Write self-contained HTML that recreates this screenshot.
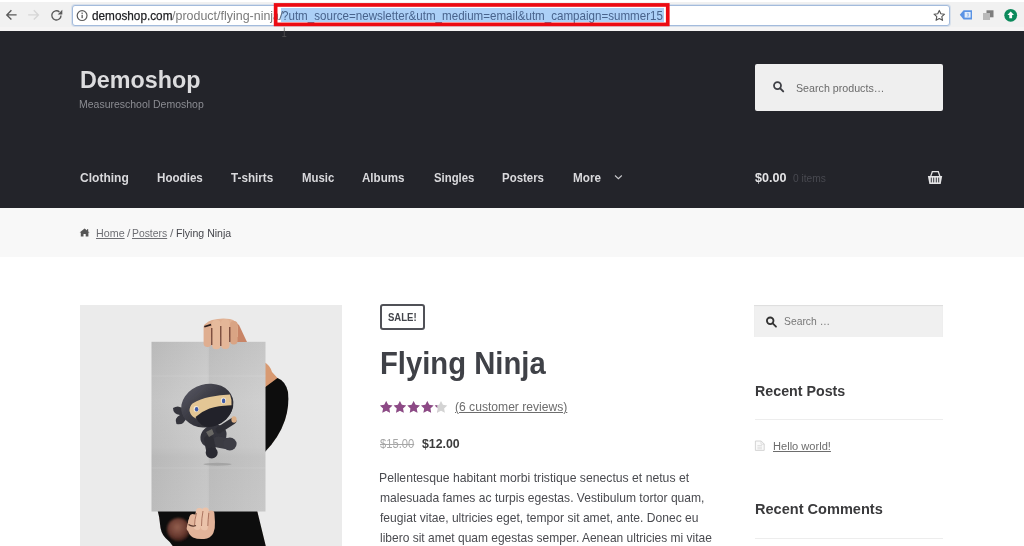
<!DOCTYPE html>
<html lang="en">
<head>
<meta charset="utf-8">
<title>Flying Ninja – Demoshop</title>
<style>
html,body,p,h1,h2,nav,main,aside{margin:0;padding:0;}
body{width:1024px;height:546px;overflow:hidden;position:relative;background:#fff;font-family:"Liberation Sans",sans-serif;}
.t{position:absolute;white-space:nowrap;line-height:1;transform-origin:0 50%;margin:0;padding:0;text-decoration:none;display:block;}
.abs{position:absolute;}
#chrome{left:0;top:0;width:1024px;height:31px;background:#f1f1f1;}
#chrome:before{content:"";position:absolute;left:0;top:0;width:100%;height:2px;background:#fff;}
#chrome:after{content:"";position:absolute;left:0;top:27px;width:100%;height:4px;background:#f5f4f4;}
#omni{left:71.5px;top:5px;width:876px;height:19px;background:#fff;border:1px solid #a3bbdc;border-radius:3px;box-shadow:0 0 0 1px rgba(150,180,220,.28);}
#sel{left:281px;top:7.5px;width:382.5px;height:14.5px;background:#acd0f7;}
#hdr{left:0;top:30.5px;width:1024px;height:177.5px;background:#23242a;}
#hsearch{left:755px;top:64px;width:187.6px;height:46.8px;background:#efefef;border-radius:2px;}
#crumb{left:0;top:208px;width:1024px;height:49px;background:#f8f8f8;}
#pimg{left:80px;top:305px;width:262px;height:241px;background:#ebebeb;overflow:hidden;}
#salebox{left:380.1px;top:304.4px;width:41.1px;height:21.8px;border:2px solid #505157;border-radius:3px;}
#ssearch{left:754.4px;top:304.7px;width:188.4px;height:32px;background:#f0f0f0;box-shadow:inset 0 1px 1px rgba(0,0,0,.08);}
.hr{left:755px;width:188px;height:1px;background:#ededed;}
</style>
</head>
<body>
<div id="chrome" class="abs"></div>
<div id="omni" class="abs"></div>
<div id="sel" class="abs"></div>
<span class="t" id="u1" style="left:92.13px;top:8.74px;font-size:13.3px;color:#202124;transform:scaleX(0.8850);-webkit-text-stroke:.25px #202124;">demoshop.com</span><span class="t" id="u2" style="left:172.20px;top:8.74px;font-size:13.3px;color:#7a7a7a;transform:scaleX(0.9369);">/product/flying-ninj</span><span class="t" id="u2b" style="left:272.87px;top:8.74px;font-size:13.3px;color:#7a7a7a;transform:scaleX(0.7926);">a</span><span class="t" id="u3" style="left:278.80px;top:8.74px;font-size:13.3px;color:#5f6f86;transform:scaleX(1.1228);">/</span><span class="t" id="u4" style="left:282.44px;top:8.74px;font-size:13.3px;color:#48638c;transform:scaleX(0.8714);">?utm_source=newsletter&amp;utm_medium=email&amp;utm_campaign=summer15</span>
<header id="hdr" class="abs"></header>
<a class="t" id="title" style="left:79.84px;top:68.76px;font-size:23.2px;font-weight:700;color:#dcdcde;transform:scaleX(1.0062);">Demoshop</a><span class="t" id="tag" style="left:78.78px;top:98.97px;font-size:10.9px;color:#8b8c92;transform:scaleX(0.9627);">Measureschool Demoshop</span>
<div id="hsearch" class="abs"></div>
<span class="t" id="sp" style="left:796.44px;top:82.18px;font-size:11.6px;color:#6b6b6b;transform:scaleX(0.9211);">Search products…</span>
<nav><a class="t" id="n1" style="left:79.75px;top:172.06px;font-size:12.1px;font-weight:700;color:#d9d9dc;transform:scaleX(0.9955);">Clothing</a><a class="t" id="n2" style="left:156.53px;top:172.06px;font-size:12.1px;font-weight:700;color:#d9d9dc;transform:scaleX(0.9601);">Hoodies</a><a class="t" id="n3" style="left:231.30px;top:172.06px;font-size:12.1px;font-weight:700;color:#d9d9dc;transform:scaleX(0.9670);">T-shirts</a><a class="t" id="n4" style="left:301.85px;top:172.06px;font-size:12.1px;font-weight:700;color:#d9d9dc;transform:scaleX(0.9408);">Music</a><a class="t" id="n5" style="left:362.31px;top:172.06px;font-size:12.1px;font-weight:700;color:#d9d9dc;transform:scaleX(0.9566);">Albums</a><a class="t" id="n6" style="left:433.52px;top:172.06px;font-size:12.1px;font-weight:700;color:#d9d9dc;transform:scaleX(0.9371);">Singles</a><a class="t" id="n7" style="left:502.44px;top:172.06px;font-size:12.1px;font-weight:700;color:#d9d9dc;transform:scaleX(0.9464);">Posters</a><a class="t" id="n8" style="left:573.03px;top:172.06px;font-size:12.1px;font-weight:700;color:#d9d9dc;transform:scaleX(0.9665);">More</a></nav>
<span class="t" id="cart1" style="left:754.84px;top:171.96px;font-size:12.1px;font-weight:700;color:#e4e4e6;transform:scaleX(1.0388);">$0.00</span><span class="t" id="cart2" style="left:792.73px;top:172.97px;font-size:10.9px;color:#484950;transform:scaleX(0.9365);">0 items</span>
<div id="crumb" class="abs"></div>
<a class="t" id="b1" style="left:95.64px;top:227.53px;font-size:10.6px;color:#6d6e73;transform:scaleX(1.0119);text-decoration:underline;text-decoration-thickness:.9px;text-underline-offset:.5px;">Home</a><span class="t" id="b2" style="left:126.60px;top:227.53px;font-size:10.6px;color:#6d6e73;transform:scaleX(1.1525);">/</span><a class="t" id="b3" style="left:132.17px;top:227.53px;font-size:10.6px;color:#6d6e73;transform:scaleX(0.9788);text-decoration:underline;text-decoration-thickness:.9px;text-underline-offset:.5px;">Posters</a><span class="t" id="b4" style="left:169.80px;top:227.53px;font-size:10.6px;color:#6d6e73;transform:scaleX(1.1525);">/</span><span class="t" id="b5" style="left:175.55px;top:227.53px;font-size:10.6px;color:#45464c;transform:scaleX(0.9976);">Flying Ninja</span>
<main>
<svg id="pimg" class="abs" width="262" height="241" viewBox="80 305 262 241" role="img" aria-label="Flying Ninja poster">
<defs>
<linearGradient id="pg" x1="0" y1="0" x2="0" y2="1"><stop offset="0" stop-color="#c3c3c3"/><stop offset=".35" stop-color="#cecece"/><stop offset=".62" stop-color="#c9c9c9"/><stop offset=".68" stop-color="#c2c2c2"/><stop offset="1" stop-color="#c6c6c6"/></linearGradient>
<linearGradient id="pg2" x1="0" y1="0" x2="1" y2="0"><stop offset="0" stop-color="#000" stop-opacity=".05"/><stop offset=".49" stop-color="#fff" stop-opacity=".05"/><stop offset=".5" stop-color="#000" stop-opacity=".04"/><stop offset="1" stop-color="#fff" stop-opacity=".04"/></linearGradient>
<radialGradient id="arm" cx=".45" cy=".4" r=".6"><stop offset="0" stop-color="#93604f"/><stop offset=".65" stop-color="#6a3a30"/><stop offset="1" stop-color="#3a1d18"/></radialGradient>
<linearGradient id="hd" x1="0" y1="0" x2=".6" y2="1"><stop offset="0" stop-color="#5b5b66"/><stop offset=".5" stop-color="#3b3b44"/><stop offset="1" stop-color="#2a2a31"/></linearGradient>
<filter id="bl" x="-10%" y="-10%" width="120%" height="120%"><feGaussianBlur stdDeviation=".6"/></filter>
<filter id="bl2" x="-20%" y="-20%" width="140%" height="140%"><feGaussianBlur stdDeviation="1.2"/></filter>
</defs>
<rect x="80" y="305" width="262" height="241" fill="#ebebeb"/>
<g filter="url(#bl)">
<!-- right arm skin + black sleeve -->
<path d="M264 362q6 3 8 10l6 6.5-13 12z" fill="#d89a72"/>
<path d="M264 388l13.5-10q8 3 10.5 14 1.500 14-3 28-6 18-21 33z" fill="#0b0908"/>
<!-- torso below poster -->
<path d="M157.500 510h99.500l9 37h-92.500q-3-5-8-9-5-5-5.500-14-.5-7-2.500-14z" fill="#0d0a09"/>
<!-- forearm -->
</g>
<ellipse cx="178.500" cy="529.500" rx="11.500" ry="11.500" fill="url(#arm)" filter="url(#bl2)"/>
<!-- poster -->
<rect x="151.500" y="341.800" width="114" height="169.700" fill="url(#pg)"/>
<rect x="151.500" y="341.800" width="114" height="169.700" fill="url(#pg2)"/>
<path d="M208.500 342v170" stroke="#fff" stroke-opacity=".12" stroke-width="1"/>
<path d="M151.500 376h114M151.500 468h114" stroke="#fff" stroke-opacity=".08" stroke-width="1.500"/>
<!-- ninja -->
<g filter="url(#bl)">
<ellipse cx="217.500" cy="464.300" rx="14" ry="1.500" fill="#8f8f8f" opacity=".55"/>
<!-- knot -->
<path d="M185 410q-6-6-12-2 0 6 7 7-6 3-3.500 9 7 2 10.500-7z" fill="#34343c"/>
<!-- body -->
<ellipse cx="213.500" cy="436" rx="13.500" ry="11" transform="rotate(-25 213.500 436)" fill="#34343c"/>
<path d="M219 430l14-9" stroke="#2f2f36" stroke-width="6.500" stroke-linecap="round"/>
<path d="M218 442l11 2" stroke="#3a3a43" stroke-width="11" stroke-linecap="round"/>
<ellipse cx="229.800" cy="444" rx="6.800" ry="6.400" fill="#3c3c45"/>
<path d="M209 440l2.500 12" stroke="#2f2f36" stroke-width="10" stroke-linecap="round"/>
<ellipse cx="211.700" cy="452.800" rx="6" ry="5.600" fill="#2c2c33"/>
<path d="M206 432l6-3 2 5-5 3z" fill="#8d8a80" opacity=".6"/>
<!-- hand -->
<ellipse cx="234" cy="419.500" rx="2.600" ry="3.200" fill="#ddb088"/>
<!-- head -->
<ellipse cx="207.300" cy="405.600" rx="26.500" ry="21.500" transform="rotate(-16 207.300 405.600)" fill="url(#hd)"/>
<!-- face -->
<path d="M189.500 411q0-5 3-7.500 8-5 17-6.500 11-2.500 20.500-2.500 2 5 1.500 11-12 .5-22 4.500-8 3.500-13.500 8.500-5-2-6.500-7.500z" fill="#e3c695"/>
<!-- mask lower -->
<path d="M195.500 417q6-5.500 14-8.500 10-3.500 23.500-3-1 8-7 14-8 7-17 7.500-9 0-13.500-10z" fill="#24242a"/>
<!-- eyes -->
<ellipse cx="196.200" cy="409" rx="2.600" ry="3" fill="#f3ead8"/><ellipse cx="223.400" cy="400.600" rx="2.600" ry="3.100" fill="#f3ead8"/>
<ellipse cx="196.600" cy="409.200" rx="1.700" ry="2.200" fill="#3f5aa8"/><ellipse cx="223.600" cy="400.900" rx="1.700" ry="2.300" fill="#3f5aa8"/>
</g>
<!-- hands -->
<g filter="url(#bl)">
<path d="M235 322l4 3 8 17h-12z" fill="#c88466"/>
<path d="M204 330q0-8 8-10 9-2.500 18-1 7 1.500 8 8v10h-34z" fill="#e0b092"/>
<rect x="203.600" y="323.500" width="8" height="23.500" rx="3.800" fill="#dfae90"/>
<rect x="212" y="320" width="8.600" height="29.300" rx="4" fill="#e6ba9c"/>
<rect x="221" y="319.300" width="8.600" height="29.700" rx="4" fill="#e4b698"/>
<rect x="230" y="321" width="7.600" height="23.500" rx="3.700" fill="#d9a484"/>
<path d="M211.800 328v17M220.800 326v20M229.800 327v15" stroke="#5e3024" stroke-width="1.100" fill="none"/>
<path d="M204.300 326.800l6.800-2.200" stroke="#2a1f1f" stroke-width="1.700"/>
</g>
<g filter="url(#bl)">
<path d="M188 530q-1-9 2-13 3-3 6-2l18-2q1.500 9 .5 16-1.500 8-7.500 9.500-8 1.500-14-1-4.500-2.500-5-7.500z" fill="#e2b49a"/>
<rect x="188" y="514" width="7.400" height="18" rx="3.600" fill="#e3b69c" transform="rotate(14 191.700 523)"/>
<rect x="194.800" y="508" width="7" height="22" rx="3.400" fill="#ebc3aa" transform="rotate(8 198.300 519)"/>
<rect x="201.400" y="507.400" width="7" height="23" rx="3.400" fill="#ebc3aa" transform="rotate(4 205 519)"/>
<rect x="208" y="510.500" width="6.400" height="20" rx="3.200" fill="#e2b298"/>
<path d="M196.500 513q-2 7-2 13M203 511q-1.500 8-1.500 15M208.800 513q-.8 7-1 13" stroke="#a46c58" stroke-width=".9" fill="none"/>
<path d="M188.500 524.500q3.500 2.500 7.500 1" stroke="#54362b" stroke-width="1.300" fill="none"/>
</g>
</svg>
<div id="salebox" class="abs"></div>
<span class="t" id="sale" style="left:388.32px;top:312.70px;font-size:10.4px;font-weight:700;color:#43454b;transform:scaleX(0.9186);">SALE!</span>
<h1 class="t" id="h1" style="left:380.17px;top:347.84px;font-size:31.5px;font-weight:700;color:#3f4147;transform:scaleX(0.9279);">Flying Ninja</h1>
<a class="t" id="rev" style="left:455.25px;top:400.86px;font-size:12.1px;color:#6d6d6d;transform:scaleX(1.0008);text-decoration:underline;text-decoration-thickness:.9px;text-underline-offset:.5px;">(6 customer reviews)</a>
<del class="t" id="p1" style="left:380.31px;top:438.36px;font-size:12.1px;color:#a6a6a6;transform:scaleX(0.9238);text-decoration:line-through;">$15.00</del><ins class="t" id="p2" style="left:421.85px;top:438.36px;font-size:12.1px;font-weight:700;color:#3c3c3c;transform:scaleX(1.0198);">$12.00</ins>
<p><span class="t" id="l1" style="left:379.44px;top:472.06px;font-size:12.1px;color:#4a4b50;transform:scaleX(1.0092);">Pellentesque habitant morbi tristique senectus et netus et</span><span class="t" id="l2" style="left:379.60px;top:492.06px;font-size:12.1px;color:#4a4b50;transform:scaleX(0.9994);">malesuada fames ac turpis egestas. Vestibulum tortor quam,</span><span class="t" id="l3" style="left:380.25px;top:512.06px;font-size:12.1px;color:#4a4b50;transform:scaleX(0.9995);">feugiat vitae, ultricies eget, tempor sit amet, ante. Donec eu</span><span class="t" id="l4" style="left:379.61px;top:532.06px;font-size:12.1px;color:#4a4b50;transform:scaleX(0.9914);">libero sit amet quam egestas semper. Aenean ultricies mi vitae</span></p>
</main>
<aside>
<div id="ssearch" class="abs"></div>
<span class="t" id="ss" style="left:784.15px;top:315.55px;font-size:11.4px;color:#777;transform:scaleX(0.9078);">Search …</span>
<h2 class="t" id="w1" style="left:754.71px;top:385.02px;font-size:13.8px;font-weight:700;color:#3a3a3c;transform:scaleX(1.0325);">Recent Posts</h2>
<div class="abs hr" style="top:419px"></div>
<a class="t" id="hw" style="left:772.70px;top:439.80px;font-size:11.7px;color:#6d6d6d;transform:scaleX(0.9489);text-decoration:underline;text-decoration-thickness:.9px;text-underline-offset:.5px;">Hello world!</a>
<h2 class="t" id="w2" style="left:754.69px;top:502.82px;font-size:13.8px;font-weight:700;color:#3a3a3c;transform:scaleX(1.0548);">Recent Comments</h2>
<div class="abs hr" style="top:538px"></div>
</aside>

<svg class="abs" id="icons" style="left:0;top:0" width="1024" height="546" viewBox="0 0 1024 546" aria-hidden="true">
<!-- browser chrome icons -->
<g fill="none" stroke="#5a5a5a" stroke-width="1.4">
<path d="M16.6 14.9H7.2M11.4 10.2L6.8 14.9l4.6 4.7"/>
<path d="M28.2 14.9h9.6M33.8 10.2l4.6 4.7-4.6 4.7" stroke="#d6d6d6"/>
<path d="M61 15.4a4.6 4.6 0 1 1-1.6-3.5"/>
<circle cx="82.1" cy="15.6" r="4.9" stroke-width="1.2"/>
</g>
<path d="M62.3 9.8v4.6h-4.6z" fill="#5a5a5a"/>
<rect x="81.5" y="14.8" width="1.3" height="3.4" fill="#5a5a5a"/><rect x="81.5" y="12.6" width="1.3" height="1.3" fill="#5a5a5a"/>
<path d="M939.3 10.4l1.55 3.4 3.7.4-2.75 2.5.75 3.65-3.25-1.85-3.25 1.85.75-3.65-2.75-2.5 3.7-.4z" fill="none" stroke="#555" stroke-width="1.1" stroke-linejoin="round"/>
<path d="M963.6 10.2H972v9.2h-8.4l-3.8-4.6z" fill="#5a93e4"/><rect x="964.6" y="12" width="6" height="5.6" fill="#e4eefb"/><path d="M966.8 13.4h1.6v2.8h-1.6M967 14.8h1.4" stroke="#7ba8e8" stroke-width=".6" fill="none"/>
<rect x="986.5" y="10.3" width="7" height="7" fill="#7d7d7d"/><rect x="983" y="13" width="7" height="7" fill="#b9b9b9"/>
<circle cx="1010.7" cy="15.3" r="6.4" fill="#0c8a5c"/><path d="M1010.7 11.4l3.3 3.6h-1.9v3.2h-2.8v-3.2h-1.9z" fill="#fff"/>
<rect x="275.65" y="4.95" width="392.1" height="19.45" fill="none" stroke="#ec0a12" stroke-width="3.7"/>
<!-- i-beam cursor -->
<path d="M284.3 27.5v9M282.3 36.5h4" stroke="#555" stroke-width="1" fill="none" opacity=".7"/>
<!-- header search icon -->
<g fill="none" stroke="#3f4046" stroke-width="1.8"><circle cx="777.5" cy="85.6" r="3.5"/><path d="M780.2 88.4l3 3" stroke-linecap="round" stroke-width="2"/></g>
<!-- chevron -->
<path d="M615 175.5l3.4 3.2 3.4-3.2" fill="none" stroke="#c9c9cc" stroke-width="1.1"/>
<!-- basket -->
<path d="M930.6 176.6l1.7-4.9h6l1.7 4.9" fill="none" stroke="#e3e3e5" stroke-width="1.3"/>
<path d="M927.9 175.9h14.3l-1.5 8h-11.3z" fill="#e3e3e5"/>
<path d="M931.3 177.6v4.8M933.7 177.6v4.8M936.3 177.6v4.8M938.7 177.6v4.8" stroke="#23242a" stroke-width=".9"/>
<!-- rating stars -->
<clipPath id="rc"><rect x="380" y="400" width="57.2" height="14"/></clipPath>
<path d="M386.20,400.90L388.11,404.87L392.48,405.46L389.29,408.50L390.08,412.84L386.20,410.75L382.32,412.84L383.11,408.50L379.92,405.46L384.29,404.87zM399.90,400.90L401.81,404.87L406.18,405.46L402.99,408.50L403.78,412.84L399.90,410.75L396.02,412.84L396.81,408.50L393.62,405.46L397.99,404.87zM413.60,400.90L415.51,404.87L419.88,405.46L416.69,408.50L417.48,412.84L413.60,410.75L409.72,412.84L410.51,408.50L407.32,405.46L411.69,404.87zM427.30,400.90L429.21,404.87L433.58,405.46L430.39,408.50L431.18,412.84L427.30,410.75L423.42,412.84L424.21,408.50L421.02,405.46L425.39,404.87zM441.00,400.90L442.91,404.87L447.28,405.46L444.09,408.50L444.88,412.84L441.00,410.75L437.12,412.84L437.91,408.50L434.72,405.46L439.09,404.87z" fill="#d3d3d3"/>
<path d="M386.20,400.90L388.11,404.87L392.48,405.46L389.29,408.50L390.08,412.84L386.20,410.75L382.32,412.84L383.11,408.50L379.92,405.46L384.29,404.87zM399.90,400.90L401.81,404.87L406.18,405.46L402.99,408.50L403.78,412.84L399.90,410.75L396.02,412.84L396.81,408.50L393.62,405.46L397.99,404.87zM413.60,400.90L415.51,404.87L419.88,405.46L416.69,408.50L417.48,412.84L413.60,410.75L409.72,412.84L410.51,408.50L407.32,405.46L411.69,404.87zM427.30,400.90L429.21,404.87L433.58,405.46L430.39,408.50L431.18,412.84L427.30,410.75L423.42,412.84L424.21,408.50L421.02,405.46L425.39,404.87zM441.00,400.90L442.91,404.87L447.28,405.46L444.09,408.50L444.88,412.84L441.00,410.75L437.12,412.84L437.91,408.50L434.72,405.46L439.09,404.87z" fill="#8d4a86" clip-path="url(#rc)"/>
<!-- home icon -->
<path d="M84.6 228.6l5 4h-1.2v3.9h-2.7v-2.6h-2.2v2.6h-2.7v-3.9h-1.2z" fill="#555"/><rect x="87" y="229.2" width="1.2" height="2" fill="#555"/>
<!-- sidebar search icon -->
<g fill="none" stroke="#333" stroke-width="1.8"><circle cx="770.2" cy="320.8" r="3.3"/><path d="M772.7 323.4l3.3 3.3" stroke-linecap="round"/></g>
<!-- file icon -->
<path d="M755.4 441h5.8l3 3v6.4h-8.8z" fill="#fafafa" stroke="#cfcfcf" stroke-width=".9"/><path d="M761 441v3.2h3.2M757.4 445.6h4.6M757.4 447.2h4.6M757.4 448.8h4.6" fill="none" stroke="#d4d4d4" stroke-width=".7"/>
</svg>
</body>
</html>
